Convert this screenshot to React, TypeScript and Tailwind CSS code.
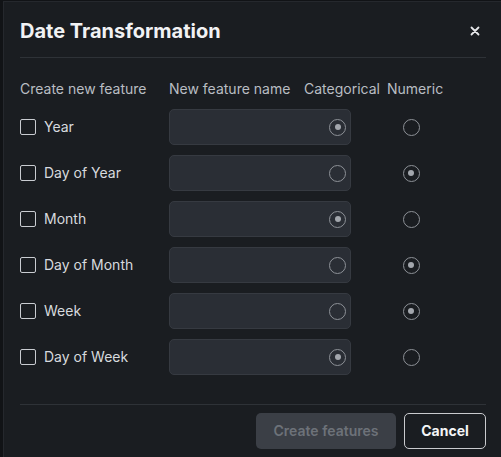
import React from "react";

const rows = [
  { label: "Year", cat: true },
  { label: "Day of Year", cat: false },
  { label: "Month", cat: true },
  { label: "Day of Month", cat: false },
  { label: "Week", cat: false },
  { label: "Day of Week", cat: true },
];

function Radio({ checked }: { checked: boolean }) {
  return (
    <span className="flex h-[17px] w-[17px] items-center justify-center rounded-full border-[1.5px] border-[#8d9197]">
      {checked ? <span className="h-[6px] w-[6px] rounded-full bg-[#a3a7ad]" /> : null}
    </span>
  );
}

export default function App() {
  return (
    <div
      className="flex h-[457px] w-[501px] bg-[#111316] pl-[3px] pt-[1px]"
      style={{ fontFamily: "Inter, 'Noto Sans', sans-serif" }}
    >
      <div className="flex flex-1 flex-col border-l border-t border-[#25282d] bg-[#1a1d21] pl-[16px] pr-[15px] pt-[15px] text-[#d4d7dc]">
        <div className="flex h-[28px] items-center justify-between">
          <h1 className="text-[20px] font-bold leading-[28px] text-[#f1f2f4]">Date Transformation</h1>
          <svg width="10" height="10" viewBox="0 0 10 10" className="mr-[6px]">
            <path d="M1.5 1.5 L8.5 8.5 M8.5 1.5 L1.5 8.5" stroke="#e6e7ea" strokeWidth="1.8" strokeLinecap="round" />
          </svg>
        </div>
        <div className="mt-[12px] h-px bg-[#2e3237]" />
        <div className="mt-[21px] flex h-5 items-center text-sm text-[#b9bdc3]">
          <span className="w-[149px]">Create new feature</span>
          <span className="w-[135px]">New feature name</span>
          <span className="w-[83px]">Categorical</span>
          <span>Numeric</span>
        </div>
        <div className="mt-[10px] flex flex-col gap-[10px]">
          {rows.map((r) => (
            <div key={r.label} className="flex h-[36px] items-center">
              <div className="flex w-[149px] items-center gap-2">
                <span className="h-4 w-4 rounded-[2px] border-[1.5px] border-[#c9ccd1]" />
                <span className="text-sm text-[#d7dade]">{r.label}</span>
              </div>
              <div className="flex h-[36px] w-[182px] items-center justify-end rounded-[5px] border border-[#363a41] bg-[#2a2e35] pr-[4px]">
                <Radio checked={r.cat} />
              </div>
              <div className="flex w-[120px] justify-center">
                <Radio checked={!r.cat} />
              </div>
            </div>
          ))}
        </div>
        <div className="mt-[29px] h-px bg-[#2e3237]" />
        <div className="mt-[8px] flex justify-end gap-2">
          <button className="h-[36px] w-[140px] rounded-[5px] bg-[#3b3f46] text-sm font-semibold text-[#6d7279]">
            Create features
          </button>
          <button className="h-[36px] w-[82px] rounded-[5px] border border-[#c9cbce] bg-[#1a1d21] text-sm font-bold text-[#f4f5f6]">
            Cancel
          </button>
        </div>
      </div>
    </div>
  );
}
